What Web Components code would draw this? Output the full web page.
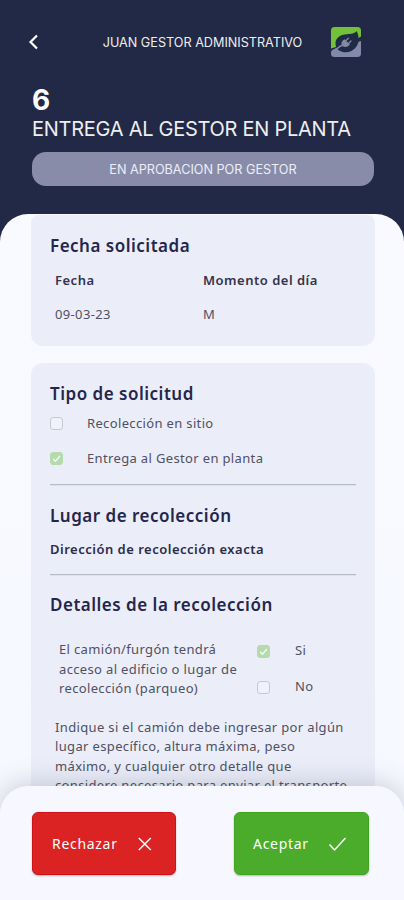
<!DOCTYPE html>
<html lang="es">
<head>
<meta charset="utf-8">
<title>Entrega al gestor en planta</title>
<style>
html,body{margin:0;height:900px;overflow:hidden;background:#212946}
</style>
</head>
<body>
<request-screen></request-screen>
<script>
const define = (name, html) => customElements.define(name, class extends HTMLElement {
  constructor() {
    super();
    this.attachShadow({ mode: 'open' }).innerHTML = html;
  }
});

define('brand-logo', `
<style>:host{display:block;width:32px;height:32px}svg{display:block}</style>
<svg width="32" height="32" viewBox="0 0 32 32">
  <path d="M4.500 1H27.500Q31 1 31 4.500V10.500L28.500 12L20 14L6 21L1 22.500V4.500Q1 1 4.500 1Z" fill="#74c038"/>
  <path d="M31 15V27.500Q31 31 27.500 31H4.500Q1 31 1 27.500V25.500L6 22L24 17Z" fill="#8389a8"/>
  <path d="M26.500 5C25 7.600 21 8 17 8.200C10 8.500 5.500 12 5.500 17.500C5.500 23.500 10.500 26.300 16 26.300C23 26.300 28.200 20.500 28.600 14C28.700 10.500 28.200 7.500 26.500 5Z" fill="#1f2a45"/>
  <path d="M2 25Q6.500 23.500 8.500 21.500T12.500 19.500" fill="none" stroke="#8389a8" stroke-width="1.500"/>
  <path d="M12.500 19.500Q11 16 14.500 14L19 18.500Q16.500 21.500 12.500 19.500ZM16 14.500L18.500 12.300M18.500 17.500L21 15" fill="#8389a8" stroke="#8389a8" stroke-width="1.300" stroke-linecap="round"/>
</svg>`);

define('status-pill', `
<style>:host{display:flex;align-items:center;justify-content:center;height:34px;border-radius:14px;background:#888ca8;color:#eceefa;font-size:12.65px}</style>
<slot></slot>`);

define('request-header', `
<style>
:host{display:block;flex:none;box-sizing:border-box;height:214px;padding:25px 30px 0 32px;color:#eeeef0;font-family:Inter,sans-serif}
.bar{display:grid;grid-template-columns:24px 1fr 32px;align-items:center;height:34px;margin-right:12px}
.back{margin-left:-5px}
.user{font-size:12.65px;text-align:center;white-space:nowrap;padding-left:19px}
.id{font-size:28px;line-height:32px;font-weight:700;color:#fff;margin-top:25px}
.title{font-size:20px;line-height:26px;letter-spacing:-.27px;white-space:nowrap}
status-pill{margin-top:10px}
svg{display:block}
</style>
<div class="bar">
  <svg class="back" width="14" height="18" viewBox="0 0 14 18"><path d="M10 2.500L3.500 9L10 15.500" fill="none" stroke="#fff" stroke-width="2.200"/></svg>
  <div class="user"><slot name="user"></slot></div>
  <brand-logo></brand-logo>
</div>
<div class="id"><slot name="id"></slot></div>
<div class="title"><slot name="title"></slot></div>
<status-pill><slot name="status"></slot></status-pill>`);

define('info-card', `
<style>:host{display:block;flex:none;box-sizing:border-box;background:#ebeef9;border-radius:12px;padding:0 19px}</style>
<slot></slot>`);

define('section-title', `
<style>:host{display:block;font-size:17px;line-height:24px;font-weight:600;letter-spacing:.5px;color:#24264b;white-space:nowrap}</style>
<slot></slot>`);

define('section-rule', `
<style>:host{display:block;height:1px;background:#b6bbc9;box-shadow:0 1px #dfe2ec}</style>`);

define('check-option', `
<style>
:host{display:grid;grid-template-columns:13px auto;column-gap:24px;align-items:center;justify-content:start;height:20px;white-space:nowrap}
.box{box-sizing:border-box;width:13px;height:13px;border:1px solid #c8cad1;border-radius:3px;background:#f0f2fb}
:host([checked]) .box{background:#b5dbad;border-color:#b5dbad}
svg{display:none;width:11px;height:11px}
:host([checked]) svg{display:block}
</style>
<span class="box"><svg viewBox="0 0 11 11"><path d="M2.200 6L4.400 8.200L9 3" fill="none" stroke="#f4fbf4" stroke-width="1.300"/></svg></span>
<span><slot></slot></span>`);

define('action-button', `
<style>
:host{display:flex;box-sizing:border-box;align-items:center;justify-content:space-between;height:63px;border-radius:6px;padding:0 19px;color:#fff;font-size:14px;background:var(--fill);border:1px solid var(--edge);box-shadow:0 1px 2px #0004;letter-spacing:.7px}
</style>
<slot></slot><slot name="icon"></slot>`);

define('action-bar', `
<style>
:host{display:flex;flex:none;box-sizing:border-box;position:relative;height:114px;border-radius:28px 28px 0 0;background:#f7f8ff;padding:26px 35px 0 32px;justify-content:space-between;align-items:flex-start;box-shadow:0 -3px 26px #303a5538}
.no{width:144px;--fill:#db2323;--edge:#cf1118}
.yes{width:135px;padding-left:18px;--fill:#4bac2b;--edge:#3fa51c}
svg{display:block}
</style>
<action-button class="no">Rechazar<svg slot="icon" width="22" height="22" viewBox="0 0 22 22"><path d="M4.800 5L16.800 17M16.800 5L4.800 17" stroke="#fff" stroke-width="1.500"/></svg></action-button>
<action-button class="yes">Aceptar<svg slot="icon" width="22" height="22" viewBox="0 0 22 22"><path d="M2.500 11.500L7.500 17L18.500 5" fill="none" stroke="#fff" stroke-width="1.500"/></svg></action-button>`);

define('request-screen', `
<style>
:host{display:flex;flex-direction:column;width:404px;height:900px;overflow:hidden;font-family:"Noto Sans",sans-serif;font-size:13px;color:#505062}
.sheet{box-sizing:border-box;height:686px;overflow:hidden;background:linear-gradient(#f8faff,#f6f8ff);border-radius:28px 28px 0 0;padding:1px 29px 0 31px;display:flex;flex-direction:column;gap:17px;flex:none;letter-spacing:.35px}
.first{height:131px;padding-top:18.5px;border-radius:8px 8px 12px 12px}
.fields{display:grid;grid-template-columns:148px auto;padding-left:5px;margin-top:12.5px;row-gap:14px;line-height:20px}
b{font-weight:600;letter-spacing:.5px;color:#34344d;white-space:nowrap}
.second{height:560px;padding-top:19px}
.o1{margin-top:7px}.o2{margin-top:15px}
.r1{margin-top:16px}.r2{margin-top:15px}
.t1{margin-top:19px}.t2{margin-top:18px}
.addr{display:block;line-height:20px;margin-top:11px;color:#2b2c4b}
.access{display:grid;grid-template-columns:198px auto;padding-left:9px;margin-top:23px;line-height:19.6px;white-space:nowrap}
.answers{display:grid;row-gap:16px;align-content:start;margin-top:1px}
.answers check-option{column-gap:25px}
.note{margin:19px 0 0 5px;line-height:19.5px;white-space:nowrap}
action-bar{margin-top:-114px}
</style>
<request-header>
  <span slot="user">JUAN GESTOR ADMINISTRATIVO</span>
  <span slot="id">6</span>
  <span slot="title">ENTREGA AL GESTOR EN PLANTA</span>
  <span slot="status">EN APROBACION POR GESTOR</span>
</request-header>
<div class="sheet">
  <info-card class="first">
    <section-title>Fecha solicitada</section-title>
    <div class="fields"><b>Fecha</b><b>Momento del día</b><span>09-03-23</span><span>M</span></div>
  </info-card>
  <info-card class="second">
    <section-title>Tipo de solicitud</section-title>
    <check-option class="o1">Recolección en sitio</check-option>
    <check-option class="o2" checked>Entrega al Gestor en planta</check-option>
    <section-rule class="r1"></section-rule>
    <section-title class="t1">Lugar de recolección</section-title>
    <b class="addr">Dirección de recolección exacta</b>
    <section-rule class="r2"></section-rule>
    <section-title class="t2">Detalles de la recolección</section-title>
    <div class="access">
      <div>El camión/furgón tendrá<br>acceso al edificio o lugar de<br>recolección (parqueo)</div>
      <div class="answers"><check-option checked>Si</check-option><check-option>No</check-option></div>
    </div>
    <div class="note">Indique si el camión debe ingresar por algún<br>lugar específico, altura máxima, peso<br>máximo, y cualquier otro detalle que<br>considere necesario para enviar el transporte</div>
  </info-card>
</div>
<action-bar></action-bar>`);
</script>
</body>
</html>
